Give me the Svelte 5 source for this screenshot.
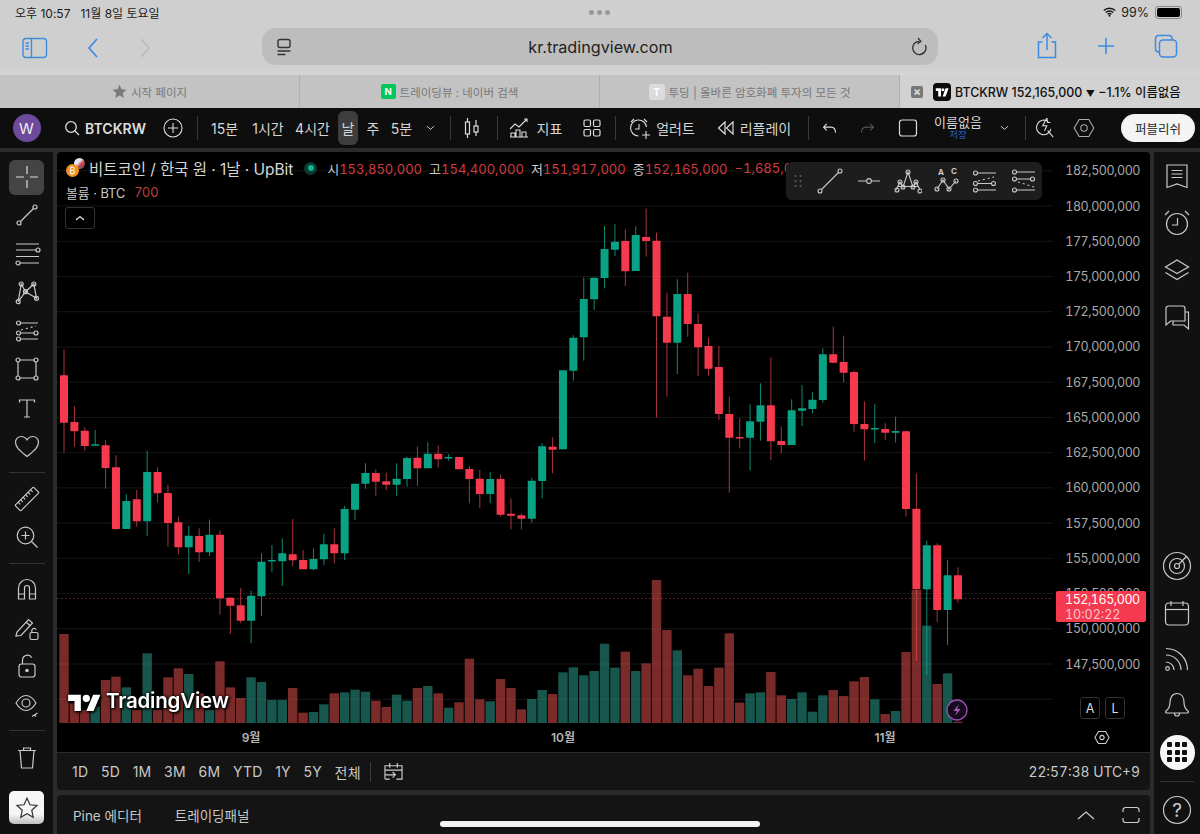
<script>
  const A = [
    ['r',28,106,248,338],['r',198,246,274,320],['r',262,272,318,332],['g',270,313,317,317],['r',300,316,384,446],
    ['r',346,382,567,570],['g',463,483,567,567],['r',450,478,544,560],['g',332,396,544,588],['r',382,396,460,488],
    ['r',434,459,549,620],['r',530,547,622,643],['g',558,587,622,702],['r',565,588,637,666],['g',539,584,637,648],
    ['r',572,584,775,824],['r',772,773,797,882],['r',744,796,842,850],['g',752,767,842,910],['g',640,665,769,828],
    ['g',615,660,664,697],['g',595,640,664,738],['r',537,643,661,678],['r',630,660,688,688],['g',625,657,688,691],
    ['g',581,613,658,675],['r',565,613,640,670],['g',497,507,640,660],['g',431,431,509,540],['g',370,399,431,446],
    ['r',388,399,425,468]
  ];
  const B = [
    ['r',818,844,854,870],['g',790,836,854,888],['g',770,774,837,860],['r',740,773,805,858],['g',727,761,805,805],
    ['r',737,761,778,802],['g',762,771,775,782],['r',771,771,808,808],['r',798,807,837,910],['r',810,836,882,924],
    ['g',816,837,882,910],['r',824,837,944,950],['r',895,941,947,988],['r',940,946,956,988],['g',833,842,956,968],
    ['g',730,739,843,895],['r',712,740,749,820],['g',511,511,748,748],['g',406,413,512,542],['g',232,297,412,482],
    ['g',233,233,298,330],['g',78,147,234,265],['g',72,125,149,168],['r',88,123,214,258],['g',79,105,213,213],
    ['r',26,111,123,170],['r',98,122,349,653],['r',278,350,428,590],['g',238,282,428,522],['r',218,282,372,410],
    ['r',340,372,442,527],['r',412,438,506,527],['r',438,501,642,660]
  ];
  const C = [
    ['r',230,282,353,518],['r',295,351,353,385],['g',253,304,353,452],['g',190,256,305,362],['r',112,256,364,420],
    ['r',320,363,375,400],['g',238,271,375,375],['g',195,265,272,318],['g',216,239,267,280],['g',85,103,240,248],
    ['r',20,103,128,130],['r',47,126,158,187],['r',152,156,312,335],['r',244,312,328,422],['g',253,324,328,370],
    ['r',310,327,338,360],['g',290,333,338,368],['r',332,334,567,590],['r',460,566,808,1023],['g',662,676,808,1065],
    ['r',670,676,870,906],['g',720,766,870,975],['r',742,766,838,848]
  ];
  const conv = (rows, off) => rows.map(([c, a, b, d, e]) => ({ c, wt: off + a / 3, bt: off + b / 3, bb: off + d / 3, wb: off + e / 3 }));
  const tops = [192,400,420,410,330,320,352,420,250,420,322,295,312,370,420,274,352,384,322,336,390,390,354,428,426,403,370,367,359,365,392,411,374,392,354,348,370,413,397,266,388,394,327,354,418,387,360,372,307,292,316,303,221,293,245,303,280,30,180,241,316,296,348,293,190,398,370,367,306,376,387,367,425,376,360,378,334,321,388,432,423,246,60,167,342,310,455];
  const candles = [...conv(A, 340), ...conv(B, 200), ...conv(C, 320)].map((k, i) => ({
    ...k,
    x: 64 + 10.395 * i,
    h: Math.max(1.5, k.bb - k.bt),
    v: 570 + tops[i] / 3
  }));
  const prices = ['182,500,000','180,000,000','177,500,000','175,000,000','172,500,000','170,000,000','167,500,000','165,000,000','162,500,000','160,000,000','157,500,000','155,000,000','152,500,000','150,000,000','147,500,000'];
  const gridY = [...prices, ''].map((_, i) => 170.8 + 35.23 * i);
  const months = [['9월', 251], ['10월', 563], ['11월', 885]];
  const ranges = ['1D','5D','1M','3M','6M','YTD','1Y','5Y','전체'];
</script>

<div class="app">
  <section class="safari">
    <div class="status">
      <span>오후 10:57</span><span class="date">11월 8일 토요일</span>
      <span class="dots"><i></i><i></i><i></i></span>
      <svg class="wifi" viewBox="0 0 16 12" width="13" height="10"><path d="M1 4.2a10 10 0 0 1 14 0M3.4 6.6a6.6 6.6 0 0 1 9.2 0M5.7 8.9a3.3 3.3 0 0 1 4.6 0" fill="none" stroke="#111" stroke-width="1.7"/><circle cx="8" cy="10.6" r="1.2" fill="#111"/></svg>
      <span class="pct">99%</span>
      <span class="batt"><b></b></span>
    </div>
    <div class="toolbar">
      <svg class="ic-side" viewBox="0 0 26 22" width="26" height="22"><rect x="1" y="1.5" width="23.5" height="19" rx="3" fill="none" stroke="#3d8be0" stroke-width="1.4"/><path d="M9.5 1.5v19" stroke="#3d8be0" stroke-width="1.4"/><path d="M3.5 6h3.5M3.5 9h3.5M3.5 12h3.5" stroke="#3d8be0" stroke-width="1.3"/></svg>
      <svg class="ic-back" viewBox="0 0 14 22" width="14" height="22"><path d="M11 2L3 11l8 9" fill="none" stroke="#3d8be0" stroke-width="1.7"/></svg>
      <svg class="ic-fwd" viewBox="0 0 14 22" width="14" height="22"><path d="M3 2l8 9-8 9" fill="none" stroke="#bcbcbc" stroke-width="1.7"/></svg>
      <div class="url">
        <svg viewBox="0 0 16 18" width="16" height="18"><rect x="2" y="1.5" width="12" height="8" rx="2" fill="none" stroke="#333" stroke-width="1.4"/><path d="M1.5 13h13M1.5 16.5h8" stroke="#333" stroke-width="1.4"/></svg>
        <span>kr.tradingview.com</span>
        <svg viewBox="0 0 18 20" width="17" height="19"><path d="M10 4.5a7 7 0 1 0 6.2 4" fill="none" stroke="#333" stroke-width="1.4"/><path d="M8.5 1l3 3.5-3.5 2.5" fill="none" stroke="#333" stroke-width="1.4"/></svg>
      </div>
      <div class="actions">
        <svg viewBox="0 0 22 28" width="22" height="28"><path d="M6.5 10H2.5v15.5h17V10h-4M11 18V2M6.5 6L11 1.5 15.5 6" fill="none" stroke="#3d8be0" stroke-width="1.5"/></svg>
        <svg viewBox="0 0 20 20" width="20" height="20"><path d="M10 2v16M2 10h16" stroke="#3d8be0" stroke-width="1.6"/></svg>
        <svg viewBox="0 0 24 24" width="24" height="24"><rect x="5.5" y="6" width="17" height="17" rx="3.5" fill="none" stroke="#3d8be0" stroke-width="1.5"/><path d="M5.5 18H4.5a3 3 0 0 1-3-3V4.5a3 3 0 0 1 3-3H15a3 3 0 0 1 3 3V6" fill="none" stroke="#3d8be0" stroke-width="1.5"/></svg>
      </div>
    </div>
    <div class="tabs">
      <div class="tab"><svg viewBox="0 0 16 16" width="15" height="15"><path d="M8 .8l2.2 4.8 5.2.6-3.9 3.5 1.1 5.2L8 12.3l-4.6 2.6 1.1-5.2L.6 6.2l5.2-.6z" fill="#7b7b7b"/></svg><span>시작 페이지</span></div>
      <div class="tab"><b class="fav-n">N</b><span>트레이딩뷰 : 네이버 검색</span></div>
      <div class="tab"><b class="fav-t">T</b><span>투딩 | 올바른 암호화폐 투자의 모든 것</span></div>
      <div class="tab active">
        <b class="close">×</b>
        <svg class="fav-tv" viewBox="0 0 18 18" width="18" height="18"><rect width="18" height="18" rx="4" fill="#0c0c0c"/><path d="M8 13.5H5.2V8H2.8V5.3H8zM12.6 13.5H9.6l3-8.200h3z" fill="#fff"/><circle cx="9.900" cy="6.800" r="1.500" fill="#fff"/></svg>
        <span>BTCKRW 152,165,000 <small class="tri">▼</small> −1.1% 이름없음</span>
      </div>
    </div>
  </section>

  <header class="head">
    <div class="cell"><span class="avatar">W</span></div>
    <div class="cell symbol">
      <svg viewBox="0 0 16 16" width="16" height="16"><circle cx="7" cy="7" r="5.300" fill="none" stroke="#ddd" stroke-width="1.300"/><path d="M11 11l4 4" stroke="#ddd" stroke-width="1.300"/></svg>
      <strong>BTCKRW</strong>
    </div>
    <div class="cell"><svg viewBox="0 0 20 20" width="20" height="20"><circle cx="10" cy="10" r="9" fill="none" stroke="#ddd" stroke-width="1.100"/><path d="M10 5v10M5 10h10" stroke="#ddd" stroke-width="1.100"/></svg></div>
    <div class="cell"><i class="vsep"></i></div>
    <div class="cell">15분</div>
    <div class="cell">1시간</div>
    <div class="cell">4시간</div>
    <div class="cell"><span class="day">날</span></div>
    <div class="cell">주</div>
    <div class="cell">5분</div>
    <div class="cell"><svg viewBox="0 0 10 6" width="9" height="6"><path d="M1 1l4 3.500L9 1" fill="none" stroke="#ccc" stroke-width="1.100"/></svg></div>
    <div class="cell"><i class="vsep"></i></div>
    <div class="cell"><svg viewBox="0 0 16 22" width="16" height="22"><rect x="1.500" y="5" width="4" height="12" fill="none" stroke="#ddd" stroke-width="1.200"/><path d="M3.500 1v4M3.500 17v4M12 3v6M12 15v4" stroke="#ddd" stroke-width="1.200"/><rect x="10" y="9" width="4" height="6" fill="none" stroke="#ddd" stroke-width="1.200"/></svg></div>
    <div class="cell"><i class="vsep"></i></div>
    <div class="cell pr10">
      <svg viewBox="0 0 20 20" width="20" height="20"><path d="M1 11l5-5 4 3 8-8M15 1h3v3" fill="none" stroke="#ddd" stroke-width="1.100"/><path d="M2 19v-4h4v4M7 19v-7h4v7M13 19v-5h4v5M1 19h18" fill="none" stroke="#ddd" stroke-width="1.100"/></svg>
      <span>지표</span>
    </div>
    <div class="cell"><svg viewBox="0 0 18 18" width="18" height="18"><g fill="none" stroke="#ddd" stroke-width="1.200"><rect x="1" y="1" width="6.500" height="6.500" rx="1.500"/><rect x="10.500" y="1" width="6.500" height="6.500" rx="1.500"/><rect x="1" y="10.500" width="6.500" height="6.500" rx="1.500"/><rect x="10.500" y="10.500" width="6.500" height="6.500" rx="1.500"/></g></svg></div>
    <div class="cell"><i class="vsep"></i></div>
    <div class="cell">
      <svg viewBox="0 0 22 22" width="22" height="22"><path d="M17.500 10a8 8 0 1 0-8 9" fill="none" stroke="#ddd" stroke-width="1.100"/><path d="M10 7v5H6M2 5l3-3M15 2l3 3M17 14v8M13 18h8" fill="none" stroke="#ddd" stroke-width="1.100"/></svg>
      <span>얼러트</span>
    </div>
    <div class="cell">
      <svg viewBox="0 0 18 14" width="18" height="14"><path d="M8 1L1.500 7 8 13zM16 1L9.500 7l6.500 6z" fill="none" stroke="#ddd" stroke-width="1.200"/></svg>
      <span>리플레이</span>
    </div>
    <div class="cell"><i class="vsep"></i></div>
    <div class="cell"><svg viewBox="0 0 16 12" width="15" height="11"><path d="M5 1L1.500 4.500 5 8M1.500 4.500h8c3 0 5 2 5 6" fill="none" stroke="#ddd" stroke-width="1.200"/></svg></div>
    <div class="cell"><svg viewBox="0 0 16 12" width="15" height="11"><path d="M11 1l3.500 3.500L11 8M14.500 4.500h-8c-3 0-5 2-5 6" fill="none" stroke="#555" stroke-width="1.200"/></svg></div>
    <div class="cell"><svg viewBox="0 0 20 20" width="20" height="20"><rect x="1.500" y="2" width="17" height="16" rx="2.500" fill="none" stroke="#ddd" stroke-width="1.200"/></svg></div>
    <div class="cell named"><span>이름없음</span><small>저장</small></div>
    <div class="cell"><svg viewBox="0 0 10 6" width="9" height="6"><path d="M1 1l4 3.500L9 1" fill="none" stroke="#ccc" stroke-width="1.100"/></svg></div>
    <div class="cell"><i class="vsep"></i></div>
    <div class="cell"><svg viewBox="0 0 22 24" width="20" height="22"><path d="M14.500 5a8 8 0 1 0 3 8M14 15l6 7" fill="none" stroke="#ddd" stroke-width="1.200"/><path d="M13 1L8.500 9.500H13L10.500 15" fill="none" stroke="#ddd" stroke-width="1.200"/><path d="M13 1l1 5h3" fill="none" stroke="#ddd" stroke-width="1.200"/></svg></div>
    <div class="cell"><svg viewBox="0 0 22 20" width="22" height="20"><path d="M6.200 1.500h9.600l5 8.500-5 8.500H6.200l-5-8.500z" fill="none" stroke="#aaa" stroke-width="1.100"/><circle cx="11" cy="10" r="3.200" fill="none" stroke="#aaa" stroke-width="1.100"/></svg></div>
    <div class="cell btn-cell"><button>퍼블리쉬</button></div>
  </header>

  <div class="workspace">
    <aside class="left">
      <div class="tool sel"><svg viewBox="0 0 28 28" width="28" height="28"><path d="M14 3v8M14 17v8M3 14h8M17 14h8" /></svg></div>
      <div class="tool"><svg viewBox="0 0 28 28" width="28" height="28"><path d="M7.500 20.500L20.500 7.500"/><circle cx="6" cy="22" r="2"/><circle cx="22" cy="6" r="2"/></svg></div>
      <div class="tool"><svg viewBox="0 0 28 28" width="28" height="28"><path d="M3 4h23M3 10h20M3 16.500h23M7 23h19"/><circle cx="25" cy="10" r="2"/><circle cx="5" cy="23" r="2"/></svg></div>
      <div class="tool"><svg viewBox="0 0 28 28" width="28" height="28"><path d="M5.200 23.700L8.200 6l4.300 7.700L20.800 6l2.700 14.300-11-6.600z"/><circle cx="8.200" cy="6" r="2"/><circle cx="20.800" cy="6" r="2"/><circle cx="12.500" cy="13.700" r="2"/><circle cx="5.200" cy="23.700" r="2"/><circle cx="23.500" cy="20.300" r="2"/></svg></div>
      <div class="tool"><svg viewBox="0 0 28 28" width="28" height="28"><path d="M7.500 6H25M7.500 16H21M7.500 22H25"/><path d="M8 13l15-4" stroke-dasharray="2 3"/><circle cx="5.500" cy="6" r="2"/><circle cx="5.500" cy="16" r="2"/><circle cx="23" cy="16" r="2"/><circle cx="5.500" cy="22" r="2"/></svg></div>
      <div class="tool"><svg viewBox="0 0 28 28" width="28" height="28"><path d="M7 5h14M7 23h14M5 7v14M23 7v14"/><circle cx="5" cy="5" r="2"/><circle cx="23" cy="5" r="2"/><circle cx="5" cy="23" r="2"/><circle cx="23" cy="23" r="2"/></svg></div>
      <div class="tool"><svg viewBox="0 0 28 28" width="28" height="28"><path d="M6.500 8.500V6h15v2.500M14 6v17M11 23h6"/></svg></div>
      <div class="tool"><svg viewBox="0 0 28 28" width="28" height="28"><path d="M14 24.500C7.500 19 2.500 15.500 2.500 10.200 2.500 6.800 5.200 4.500 8.200 4.500c2.400 0 4.300 1.100 5.800 3.400 1.500-2.300 3.400-3.400 5.800-3.400 3 0 5.700 2.300 5.700 5.700 0 5.300-5 8.800-11.500 14.300z"/></svg></div>
      <i class="hsep"></i>
      <div class="tool"><svg viewBox="0 0 28 28" width="28" height="28"><g transform="rotate(-45 14 14)"><rect x="1" y="10" width="26" height="8" rx="1"/><path d="M5.500 10v3M9 10v3M12.500 10v3M16 10v3M19.500 10v3M23 10v3"/></g></svg></div>
      <div class="tool"><svg viewBox="0 0 28 28" width="28" height="28"><circle cx="12.500" cy="12.500" r="8.300"/><path d="M18.500 18.500l6 6M12.500 8.500v8M8.500 12.500h8"/></svg></div>
      <i class="hsep"></i>
      <div class="tool"><svg viewBox="0 0 28 28" width="28" height="28"><path d="M5.500 24V13a8.500 8.500 0 0 1 17 0v11h-6V13a2.500 2.500 0 0 0-5 0v11zM5.500 19h6M16.500 19h6"/></svg></div>
      <div class="tool"><svg viewBox="0 0 28 28" width="28" height="28"><path d="M3 22l1-4L15.500 5.500l4 3.500L8 21.500zM13 8l4 3.500"/><rect x="17" y="18.500" width="8" height="7" rx="1.500"/><path d="M18.800 18.500v-2a2.300 2.300 0 0 1 4.400-.8"/></svg></div>
      <div class="tool"><svg viewBox="0 0 28 28" width="28" height="28"><rect x="6" y="12" width="16" height="13" rx="2.500"/><path d="M9.500 12V8a5 5 0 0 1 9.300-2.300"/><circle class="solid" cx="14" cy="18.500" r="1.200"/></svg></div>
      <div class="tool"><svg viewBox="0 0 28 28" width="28" height="28"><path d="M3 12c3-5 6.500-7.500 10-7.500S20 7 23 12c-3 5-6.500 7.500-10 7.500S6 17 3 12z"/><circle cx="13" cy="12" r="4"/><path d="M19 25.500l5.500-3.500M21.500 24l1.500 1.500"/></svg></div>
      <i class="hsep"></i>
      <div class="tool"><svg viewBox="0 0 28 28" width="28" height="28"><path d="M5 7.500h18M10.500 7.500V5h7v2.500M7 7.500l1.500 17.500h11L21 7.500"/></svg></div>
      <div class="starbox"><svg viewBox="0 0 28 28" width="26" height="26"><path d="M14 3.500l3.200 7 7.600.8-5.700 5.100 1.600 7.500L14 20.100l-6.700 3.800 1.600-7.500-5.700-5.100 7.600-.8z"/></svg></div>
    </aside>

    <main class="center">
      <div class="chart">
        <svg class="plot" viewBox="57 152 1093 600" width="1093" height="600">
          {#each gridY as y}
            <line x1="57" x2="1053" y1={y} y2={y} class="grid"/>
          {/each}
          <line x1="57" x2="1053" y1="598.500" y2="598.500" class="last"/>
          {#each candles as k}
            <line x1={k.x} x2={k.x} y1={k.wt} y2={k.wb} class={k.c === 'r' ? 'wr' : 'wg'}/>
          {/each}
          {#each candles as k}
            <rect x={k.x - 4} width="8" y={k.bt} height={k.h} class={k.c === 'r' ? 'br' : 'bg'} rx="0.500"/>
          {/each}
          {#each candles as k}
            <rect x={k.x - 4.700} width="9.400" y={k.v} height={723 - k.v} class={k.c === 'r' ? 'vr' : 'vg'}/>
          {/each}
          {#each prices as p, i}
            <text x="1140" y={175.300 + 35.230 * i} class="price">{p}</text>
          {/each}
          {#each months as [m, x]}
            <text x={x} y="742" class="month">{m}</text>
          {/each}
        </svg>

        <div class="legend">
          <div class="l1">
            <span class="coins"><i class="c-flag"></i><i class="c-btc">₿</i></span>
            <span class="title">비트코인 / 한국 원 · 1날 · UpBit</span>
            <span class="live"><i></i></span>
            <span class="ohlc">시<em>153,850,000</em></span>
            <span class="ohlc">고<em>154,400,000</em></span>
            <span class="ohlc">저<em>151,917,000</em></span>
            <span class="ohlc">종<em>152,165,000</em></span>
            <em class="chg">−1,685,000</em>
          </div>
          <div class="l2"><span>볼륨 · BTC</span><em>700</em></div>
          <div class="collapse"><svg viewBox="0 0 10 6" width="10" height="6"><path d="M1 5l4-3.500L9 5" fill="none" stroke="#ddd" stroke-width="1.300"/></svg></div>
        </div>

        <div class="float">
          <svg class="grip" viewBox="0 0 8 14" width="8" height="14"><g fill="#555"><circle cx="1.500" cy="2" r="1"/><circle cx="6.500" cy="2" r="1"/><circle cx="1.500" cy="7" r="1"/><circle cx="6.500" cy="7" r="1"/><circle cx="1.500" cy="12" r="1"/><circle cx="6.500" cy="12" r="1"/></g></svg>
          <svg viewBox="0 0 28 28" width="28" height="28"><path d="M5.500 22.500L22.500 5.500"/><circle cx="4" cy="24" r="2"/><circle cx="24" cy="4" r="2"/></svg>
          <svg viewBox="0 0 28 28" width="28" height="28"><path d="M3 14h8.500M16.500 14H25"/><circle cx="14" cy="14" r="2.400"/></svg>
          <svg viewBox="0 0 28 28" width="28" height="28"><path d="M2 23l4-8 3 5 5-15 5 15 3-5 4 8M4 19.500h21"/><circle cx="6" cy="15" r="2"/><circle cx="9" cy="20" r="2"/><circle cx="14" cy="5" r="2"/><circle cx="19" cy="20" r="2"/><circle cx="22" cy="15" r="2"/><circle cx="3" cy="23" r="2"/><circle cx="26" cy="24" r="2"/></svg>
          <span class="abc"><svg viewBox="0 0 28 28" width="28" height="28"><path d="M4 22l6-9 6 9 7-8"/><circle cx="4" cy="22" r="2"/><circle cx="10" cy="13" r="2"/><circle cx="16" cy="22" r="2"/><circle cx="23" cy="14" r="2"/><text x="8" y="8" class="tiny">A</text><text x="21" y="7" class="tiny">C</text></svg></span>
          <svg viewBox="0 0 28 28" width="28" height="28"><path d="M5 6h19M5 16.500h15M5 23h19"/><path d="M6 14l16-4" stroke-dasharray="2 3"/><circle cx="3.500" cy="6" r="2"/><circle cx="3.500" cy="16.500" r="2"/><circle cx="21.500" cy="16.500" r="2"/><circle cx="3.500" cy="23" r="2"/></svg>
          <svg viewBox="0 0 28 28" width="28" height="28"><path d="M5 5h19M5 12h15M5 23h19"/><path d="M7 15l16 5" stroke-dasharray="2 3"/><circle cx="3.500" cy="5" r="2"/><circle cx="3.500" cy="12" r="2"/><circle cx="21.500" cy="12" r="2"/><circle cx="3.500" cy="23" r="2"/></svg>
        </div>

        <div class="wm">
          <svg viewBox="0 0 36 22" width="33" height="20"><path d="M14 22H7V11H0V4h14zM28 22h-8l7.500-18h8z" fill="#fff"/><circle cx="20" cy="8" r="4" fill="#fff"/></svg>
          <span>TradingView</span>
        </div>
        <div class="tag"><span>152,165,000</span><small>10:02:22</small></div>
        <div class="al"><b>A</b><b>L</b></div>
        <svg class="gear" viewBox="0 0 18 16" width="16" height="15"><path d="M5 1.200h8l4 6.800-4 6.800H5L1 8z" fill="none" stroke="#ccc" stroke-width="1.200"/><circle cx="9" cy="8" r="2.400" fill="none" stroke="#ccc" stroke-width="1.200"/></svg>
        <svg class="bolt" viewBox="0 0 22 22" width="22" height="22"><circle cx="11" cy="11" r="10" fill="#160b1c" stroke="#9c4fb5" stroke-width="1.300"/><path d="M13 5l-5.500 7H11l-2 5 5.500-7H11z" fill="#a85bc2"/></svg>
      </div>

      <div class="ranges">
        {#each ranges as r}<span>{r}</span>{/each}
        <i class="vsep mini"></i>
        <svg viewBox="0 0 22 20" width="21" height="19"><path d="M2 18V4h18v14h-6M7 1v5M15 1v5M2 8.500h18M2 13.500h11M10 10.500l3 3-3 3M2 18h5" fill="none" stroke="#ccc" stroke-width="1.200"/></svg>
        <span class="clock">22:57:38 UTC+9</span>
      </div>
      <div class="pine">
        <span>Pine 에디터</span><span>트레이딩패널</span>
        <svg class="up" viewBox="0 0 18 10" width="18" height="10"><path d="M1 9l8-7 8 7" fill="none" stroke="#ccc" stroke-width="1.200"/></svg>
        <svg viewBox="0 0 18 18" width="18" height="18"><path d="M1 6V4a2.500 2.500 0 0 1 2.500-2.500h11A2.500 2.500 0 0 1 17 4v2M1 12v2a2.500 2.500 0 0 0 2.500 2.500h11A2.500 2.500 0 0 0 17 14v-2" fill="none" stroke="#ccc" stroke-width="1.200"/></svg>
      </div>
    </main>

    <aside class="right">
      <div class="rt"><svg viewBox="0 0 28 28" width="28" height="28"><path d="M4 3h20v22.500l-10-3.500-10 3.500zM8.500 8.500h11M8.500 12h11M8.500 15.500h11"/></svg></div>
      <div class="rt"><svg viewBox="0 0 30 30" width="30" height="30"><circle cx="15" cy="16" r="10.500"/><path d="M15.500 10v7H10M3 7l4-4M23 3l4 4"/></svg></div>
      <div class="rt"><svg viewBox="0 0 28 28" width="28" height="28"><path d="M14 4l11.500 7L14 17.500 2.500 11zM2.500 16.500L14 23.500l11.500-7"/></svg></div>
      <div class="rt"><svg viewBox="0 0 28 28" width="28" height="28"><path d="M3 4.500A2.500 2.500 0 0 1 5.500 2h14A2.500 2.500 0 0 1 22 4.500V17H7.500L3 21z"/><path d="M22 8h3.500v17L21 21H10v-4"/></svg></div>
      <div class="spacer"></div>
      <div class="rt"><svg viewBox="0 0 30 30" width="30" height="30"><circle cx="15" cy="15" r="13.500"/><circle cx="15" cy="15" r="7.500"/><circle cx="15" cy="15" r="2.500"/><path d="M17 13l7.500-7.500"/></svg></div>
      <div class="rt"><svg viewBox="0 0 28 28" width="28" height="28"><rect x="2.500" y="4" width="23" height="22" rx="3.500"/><path d="M2.500 10.500h23"/><path d="M8 2v5M20 2v5" stroke-width="2.400"/></svg></div>
      <div class="rt rss"><svg viewBox="0 0 28 28" width="28" height="28"><path d="M3 17a8 8 0 0 1 8 8M3 10a15 15 0 0 1 15 15M3 3.500A21.500 21.500 0 0 1 24.500 25"/><circle cx="4.500" cy="23.500" r="1.800"/></svg></div>
      <div class="rt"><svg viewBox="0 0 28 28" width="28" height="28"><path d="M14 2.500c-5 0-7 4.500-7 9 0 4.500-1.500 6.500-4 8.500-.8.700-.5 2 .8 2h20.400c1.300 0 1.600-1.300.8-2-2.500-2-4-4-4-8.500 0-4.500-2-9-7-9zM11.500 22.500a2.500 2.500 0 0 0 5 0"/></svg></div>
      <div class="rt"><span class="apps"><i></i><i></i><i></i><i></i><i></i><i></i><i></i><i></i><i></i></span></div>
      <i class="hsep rsep"></i>
      <div class="rt help"><svg viewBox="0 0 30 30" width="30" height="30"><circle cx="15" cy="15" r="13.500"/></svg><span>?</span></div>
    </aside>
  </div>
  <div class="home"></div>
</div>

<style>
  :global(body) { margin: 0; background: #2a2a2a; }
  .app { position: relative; width: 1200px; height: 834px; overflow: hidden; display: flex; flex-direction: column; font-family: Inter, "Noto Sans CJK KR", sans-serif; }
  i { font-style: normal; }
  em { font-style: normal; }

  .safari { background: #cfcfcf; height: 108px; display: flex; flex-direction: column; color: #1a1a1a; flex: none; }
  .status { height: 24px; display: flex; align-items: center; padding: 0 0 0 15px; font-size: 12px; position: relative; }
  .date { margin-left: 10px; }
  .dots { position: absolute; left: 589px; top: 10px; display: flex; gap: 3px; }
  .dots i { width: 5px; height: 5px; border-radius: 50%; background: #9a9a9a; }
  .wifi { margin-left: auto; margin-right: 5px; }
  .pct { margin-right: 6px; font-size: 12.5px; }
  .batt { width: 23px; border: 1px solid #888; border-radius: 3px; margin-right: 18px; padding: 1px; box-sizing: content-box; display: block; height: 9px; }
  .batt b { display: block; width: 100%; height: 100%; background: #000; border-radius: 2px; }

  .toolbar { height: 51px; position: relative; display: flex; align-items: center; background: linear-gradient(#cfcfcf 85%, #d6d6d6); }
  .ic-side { margin-left: 22px; margin-top: -3px; }
  .ic-back { margin-left: 38px; margin-top: -3px; }
  .ic-fwd { margin-left: 38px; margin-top: -3px; }
  .url { position: absolute; left: 262px; top: 4px; width: 676px; height: 37px; background: #bdbdbd; border-radius: 14px; display: flex; align-items: center; justify-content: space-between; padding: 0 11px 0 14px; box-sizing: border-box; }
  .url span { font-size: 16.2px; color: #222; margin-left: -1px; }
  .actions { position: absolute; left: 1036px; top: 8px; width: 142px; display: flex; justify-content: space-between; align-items: center; height: 28px; }

  .tabs { flex: 1; display: grid; grid-template-columns: 300px 300px 300px 300px; }
  .tab { background: #c3c3c3; border-right: 1px solid #b0b0b0; box-sizing: border-box; display: flex; align-items: center; justify-content: center; gap: 4px; font-size: 11.5px; color: #777; }
  .tab.active { background: #d2d2d2; border: 0; color: #111; font-size: 12.4px; font-weight: 500; justify-content: flex-start; padding-left: 11px; }
  .tri { font-size: 9px; }
  .fav-n { width: 15px; height: 15px; background: #03c75a; color: #fff; border-radius: 2px; font-size: 9.5px; display: flex; align-items: center; justify-content: center; }
  .fav-t { width: 16px; height: 16px; background: #dcdcdc; color: #fff; border-radius: 3px; font-size: 10px; display: flex; align-items: center; justify-content: center; }
  .close { width: 12px; height: 12px; background: #777; color: #ddd; border-radius: 2px; font-size: 12px; line-height: 11px; text-align: center; margin-right: 6px; }
  .fav-tv { margin-right: 0; }

  .head { height: 40px; background: #0e0e0f; flex: none; display: grid; grid-template-columns: 53px 102px 36px 12px 43px 44px 45px 26px 24px 33px 24px 16px 28px 22px 65px 38px 8px 86px 98px 10px 32px 44px 38px 62px 30px 12px 28px 50px 91px; align-items: center; color: #d5d5d5; font-size: 14px; }
  .cell { display: flex; align-items: center; justify-content: center; gap: 5px; white-space: nowrap; height: 100%; }
  .pr10 { padding-right: 10px; box-sizing: border-box; gap: 8px; }
  .avatar { width: 28px; height: 28px; border-radius: 50%; background: #6d4a9c; color: #eee; display: flex; align-items: center; justify-content: center; font-size: 15px; }
  .symbol { gap: 5px; padding-left: 2px; box-sizing: border-box; }
  .symbol strong { font-size: 14px; font-weight: 600; color: #ddd; }
  .vsep { display: block; width: 1px; height: 24px; background: #3a3a3a; }
  .day { width: 20px; height: 34px; background: #3d3d3d; border-radius: 6px; display: flex; align-items: center; justify-content: center; }
  .named { flex-direction: column; gap: 0; line-height: 1.05; }
  .named span { font-size: 13px; }
  .named small { font-size: 9.5px; color: #2f5fc0; margin-top: 0; }
  .btn-cell { justify-content: flex-start; padding-left: 12px; box-sizing: border-box; }
  .btn-cell button { width: 74px; height: 28px; border: 0; border-radius: 14px; background: #f4f4f4; color: #222; font: inherit; font-size: 12.5px; padding: 0; }

  .workspace { flex: 1; display: flex; gap: 4px; padding-top: 4px; min-height: 0; background: #2b2b2b; }
  .left { width: 53px; flex: none; background: #111; display: flex; flex-direction: column; align-items: center; padding-top: 5.700px; box-sizing: border-box; }
  .tool { width: 35px; height: 38.500px; flex: none; display: flex; align-items: center; justify-content: center; }
  .tool.sel { background: #444; border-radius: 6px; height: 35px; margin: 2px 0 1.500px; }
  .left svg path, .left svg circle, .left svg rect { fill: none; stroke: #c9c9c9; stroke-width: 1.200; }
  .left svg circle.solid { fill: #c9c9c9; }
  .left .sel svg path { stroke: #ddd; }
  .hsep { display: block; flex: none; width: 36px; height: 1px; background: #333; margin: 6.300px 0; }
  .starbox { width: 35px; height: 33px; margin-top: 15.500px; background: linear-gradient(#f6f6f6 70%, #bdbdbd); border-radius: 5px; flex: none; display: flex; align-items: center; justify-content: center; }
  .left .starbox svg path { stroke: #333; stroke-width: 1.300; }

  .center { width: 1093px; flex: none; display: flex; flex-direction: column; }
  .chart { position: relative; height: 600px; background: #000; border-radius: 4px 4px 0 0; flex: none; overflow: hidden; }
  .plot { display: block; }
  .grid { stroke: #171717; stroke-width: 1; }
  .last { stroke: #8a2c33; stroke-width: 1; stroke-dasharray: 1.500 2.500; }
  .wr { stroke: #a8343f; stroke-width: 1; }
  .wg { stroke: #0c8b73; stroke-width: 1; }
  .br { fill: #f5394f; }
  .bg { fill: #0aa285; }
  .vr { fill: rgba(218, 77, 73, .56); }
  .vg { fill: rgba(43, 158, 142, .54); }
  .price { fill: #a8a8a8; font-size: 12.500px; text-anchor: end; font-variant-numeric: tabular-nums; letter-spacing: -.45px; }
  .month { fill: #b4b4b4; font-size: 12px; font-weight: 600; text-anchor: middle; }

  .legend { position: absolute; left: 8px; top: 5px; color: #c9c9c9; width: 780px; }
  .l1 { display: flex; align-items: center; height: 22px; white-space: nowrap; overflow: hidden; }
  .coins { position: relative; width: 24px; height: 20px; flex: none; }
  .c-flag { position: absolute; left: 9px; top: 0; width: 11px; height: 11px; border-radius: 50%; background: linear-gradient(135deg, #dfe6f2 40%, #c44 60%, #33549c); }
  .c-btc { position: absolute; left: 1px; top: 6px; width: 13px; height: 13px; border-radius: 50%; background: #f0921c; color: #fff; font-size: 9px; line-height: 13px; text-align: center; }
  .title { font-size: 15.500px; color: #d6d6d6; letter-spacing: -.05px; }
  .live { margin-left: 11px; width: 13px; height: 13px; border-radius: 50%; background: #0d3a30; display: flex; align-items: center; justify-content: center; margin-right: 10px; flex: none; }
  .live i { width: 6px; height: 6px; border-radius: 50%; background: #12b58f; }
  .ohlc { font-size: 13px; color: #c9c9c9; margin-right: 7px; }
  .ohlc em, .chg { color: #d13b41; font-size: 13px; font-variant-numeric: tabular-nums; }
  .l2 { display: flex; gap: 9.500px; font-size: 12.800px; height: 22px; align-items: center; margin-top: 2px; padding-left: 1px; }
  .l2 em { color: #b9423f; font-size: 13px; }
  .collapse { width: 30px; height: 22px; border: 1px solid #333; border-radius: 3px; box-sizing: border-box; display: flex; align-items: center; justify-content: center; margin-top: 4px; }

  .float { position: absolute; left: 729px; top: 10px; width: 256px; height: 38px; background: #1d1d1d; border-radius: 6px; display: flex; align-items: center; gap: 11px; padding-left: 8px; box-sizing: border-box; }
  .float svg path, .float svg circle { fill: none; stroke: #c9c9c9; stroke-width: 1.100; }
  .float .grip { margin-right: 3px; opacity: .9; }
  .float .grip circle { fill: #666; stroke: none; }
  .abc { display: flex; }
  .tiny { font-size: 8px; font-weight: 700; fill: #c9c9c9; stroke: none; text-anchor: middle; }

  .wm { position: absolute; left: 11px; top: 536px; display: flex; align-items: center; gap: 5px; color: #fff; filter: drop-shadow(0 0 1.500px #000) drop-shadow(1px 1px 1px #000); }
  .wm span { font-size: 20.500px; font-weight: 600; letter-spacing: -.2px; }
  .tag { position: absolute; left: 999px; top: 439px; width: 90px; height: 31px; background: #f5394f; border-radius: 2px; box-sizing: border-box; padding: 0 0 0 9px; display: flex; flex-direction: column; justify-content: center; color: #fff; font-size: 12.500px; line-height: 15px; font-variant-numeric: tabular-nums; letter-spacing: -.45px; }
  .tag small { font-size: 12.500px; color: #ffc4cc; letter-spacing: 0; }
  .al { position: absolute; left: 1023px; top: 545px; display: flex; gap: 5px; }
  .al b { width: 20px; height: 22px; box-sizing: border-box; border: 1px solid #333; border-radius: 3px; background: #000; color: #ddd; font-weight: 400; font-size: 12.500px; display: flex; align-items: center; justify-content: center; }
  .gear { position: absolute; left: 1037px; top: 578px; }
  .bolt { position: absolute; left: 889px; top: 547px; }

  .ranges { height: 38px; flex: none; background: #141414; border-top: 1px solid #2c2c2c; box-sizing: border-box; display: flex; align-items: center; gap: 12.600px; padding-left: 15px; color: #c8c8c8; font-size: 14px; letter-spacing: .25px; border-radius: 0 0 4px 4px; }
  .vsep.mini { height: 20px; background: #3a3a3a; margin-left: -3px; margin-right: -1px; }
  .clock { margin-left: auto; margin-right: 10px; font-size: 13.800px; letter-spacing: 0; font-variant-numeric: tabular-nums; }
  .pine { flex: 1; margin-top: 5px; background: #141414; border-radius: 4px 4px 0 0; display: flex; align-items: center; gap: 33px; padding: 0 10px 0 16px; color: #c8c8c8; font-size: 13.500px; }
  .up { margin-left: auto; margin-right: -6px; }

  .right { flex: 1; background: #111; display: flex; flex-direction: column; align-items: center; padding-top: 0; }
  .rt { height: 47.300px; flex: none; display: flex; align-items: center; justify-content: center; position: relative; }
  .rt.rss { height: 44px; }
  .rt svg path, .rt svg circle, .rt svg rect { fill: none; stroke: #c9c9c9; stroke-width: 1.200; }
  .spacer { flex: 1; }
  .apps { width: 35px; height: 35px; border-radius: 50%; background: #f7f7f7; display: grid; grid-template-columns: repeat(3, 5px); grid-auto-rows: 5px; gap: 2.500px; align-content: center; justify-content: center; }
  .apps i { background: #111; border-radius: 1px; }
  .rsep { width: 34px; margin: 5px 0 5px; }
  .help span { position: absolute; left: 0; right: 0; text-align: center; color: #ccc; font-size: 19px; line-height: 47px; top: 0; }
  .home { position: absolute; left: 440px; top: 821px; width: 320px; height: 6px; border-radius: 3px; background: #f5f5f5; }
</style>
